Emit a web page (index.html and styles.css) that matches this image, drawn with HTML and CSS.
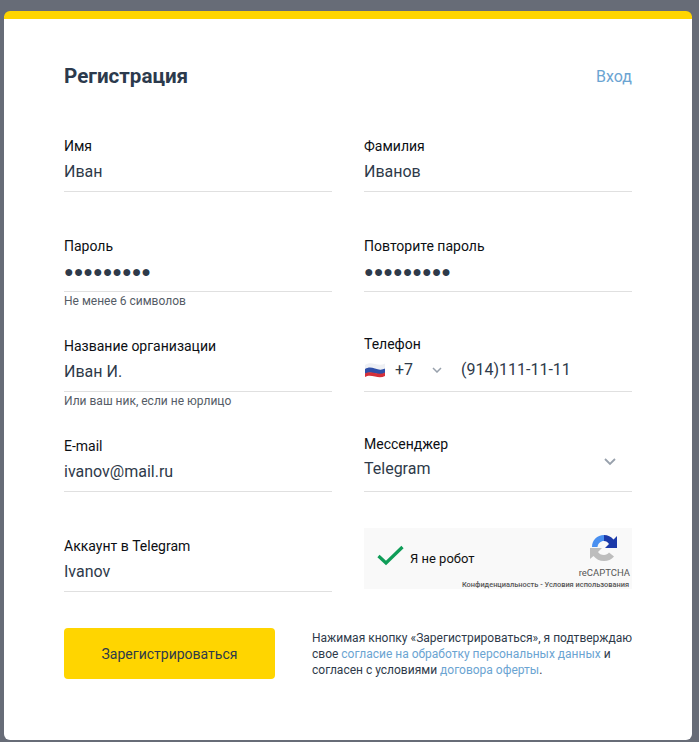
FILE: index.html
```html
<!DOCTYPE html>
<html lang="ru">
<head>
    <meta charset="UTF-8">
    <title>Регистрация</title>
    <link rel="stylesheet" href="styles.css">
</head>
<body>
    <div class="card">
        <div class="card-head">
            <h1>Регистрация</h1>
            <a class="link" href="#">Вход</a>
        </div>

        <div class="form-grid">
            <div class="field">
                <div class="label">Имя</div>
                <div class="value">Иван</div>
            </div>
            <div class="field">
                <div class="label">Фамилия</div>
                <div class="value">Иванов</div>
            </div>
            <div class="field">
                <div class="label">Пароль</div>
                <div class="value">●●●●●●●●●</div>
                <div class="hint">Не менее 6 символов</div>
            </div>
            <div class="field">
                <div class="label">Повторите пароль</div>
                <div class="value">●●●●●●●●●</div>
            </div>
            <div class="field">
                <div class="label">Название организации</div>
                <div class="value">Иван И.</div>
                <div class="hint">Или ваш ник, если не юрлицо</div>
            </div>
            <div class="field raised">
                <div class="label">Телефон</div>
                <div class="value phone">
                    <svg class="flag" width="22" height="16" viewBox="0 0 22 16">
                        <path d="M1 3c3-2 6-2 10-1s7 1 10-.5V6c-3 1.500-6 1.500-10 .5S4 5 1 7z" fill="#eef0f4"/>
                        <path d="M1 7c3-2 6-2 10-.5s7 1.500 10 0v4.500c-3 1.500-6 1.500-10 .5s-7-1-10 .5z" fill="#2f4fa8"/>
                        <path d="M1 11.500c3-1.500 6-1.500 10-.5s7 1 10-.5V14c-3 1.500-6 1.500-10 .5S4 13 1 15z" fill="#d5303a"/>
                    </svg>
                    <span class="code">+7</span>
                    <svg class="chevron small" width="10" height="6" viewBox="0 0 10 6"><path d="M1 1l4 4 4-4" fill="none" stroke="#98a1ac" stroke-width="1.500"/></svg>
                    <span>(914)111-11-11</span>
                </div>
            </div>
            <div class="field">
                <div class="label">E-mail</div>
                <div class="value">ivanov@mail.ru</div>
            </div>
            <div class="field raised">
                <div class="label">Мессенджер</div>
                <div class="value select">
                    <span>Telegram</span>
                    <svg class="chevron large" width="12" height="8" viewBox="0 0 12 8"><path d="M1 1l5 5 5-5" fill="none" stroke="#98a1ac" stroke-width="1.800"/></svg>
                </div>
            </div>
            <div class="field">
                <div class="label">Аккаунт в Telegram</div>
                <div class="value">Ivanov</div>
            </div>
            <div class="captcha">
                <svg class="check" width="27" height="21" viewBox="0 0 27 21"><path d="M1.500 11l7.500 7L25.500 2" fill="none" stroke="#0f9d58" stroke-width="3.200"/></svg>
                <span class="captcha-text">Я не робот</span>
                <div class="captcha-brand">
                    <svg width="30" height="30" viewBox="0 0 30 30">
                        <path d="M3 14C3 7 8 2 15 2v6c-3.500 0-6 2.500-6.500 6z" fill="#4a90f0"/>
                        <path d="M15 2c4 0 7 1.500 9.500 4.500L28 3v12H16l4-4c-1.200-1.800-3-3-5-3z" fill="#1c3aa9"/>
                        <path d="M1 15h12l-4 4c1.200 1.800 3.200 3 6 3 2 0 4-1 5-2.500l5 4c-2.500 3-6 4.500-10 4.500-4.500 0-8-2-10.500-5L1 26z" fill="#bdbdbd"/>
                    </svg>
                    <span class="brand-name">reCAPTCHA</span>
                </div>
                <div class="captcha-terms">Конфиденциальность - Условия использования</div>
            </div>
        </div>

        <div class="card-foot">
            <button class="submit">Зарегистрироваться</button>
            <p class="terms">Нажимая кнопку «Зарегистрироваться», я подтверждаю свое <a class="link" href="#">согласие на обработку персональных данных</a> и согласен с условиями <a class="link" href="#">договора оферты</a>.</p>
        </div>
    </div>
</body>
</html>
```

FILE: styles.css
```css
* {
    box-sizing: border-box;
}
body {
    margin: 0;
    height: 742px;
    overflow: hidden;
    background-color: #676c77;
    font-family: Roboto, "Liberation Sans", sans-serif;
}
.card {
    width: 688px;
    height: 729px;
    margin: 11px 0 0 4px;
    padding: 0 60px;
    background-color: #fff;
    border-top: 8px solid #ffd500;
    border-radius: 6px;
    color: #2e3a4a;
}
.card-head {
    display: flex;
    justify-content: space-between;
    align-items: center;
    height: 93px;
    padding-top: 21px;
}
h1 {
    margin: 0;
    font-size: 20.600px;
    font-weight: 700;
    color: #2c3a4d;
}
.card-head .link {
    margin-top: 1px;
    font-size: 16px;
}
.link {
    color: #6ba4d2;
    text-decoration: none;
}
.form-grid {
    display: grid;
    grid-template-columns: 268px 268px;
    grid-auto-rows: 100px;
    column-gap: 32px;
}
.field {
    padding-top: 24px;
}
.label {
    height: 20px;
    font-size: 14px;
    line-height: 20px;
    color: #0c0f14;
}
.value {
    height: 36px;
    padding-bottom: 3px;
    font-size: 16px;
    line-height: 32px;
    border-bottom: 1px solid #e0e0e0;
}
.hint {
    margin-top: 1px;
    font-size: 12px;
    line-height: 16px;
    color: #555c66;
}
.raised .label {
    margin-top: -2px;
}
.raised .value {
    height: 38px;
    padding-bottom: 7px;
}
.raised .phone {
    padding-bottom: 5px;
}
.phone {
    display: flex;
    align-items: center;
}
.flag {
    margin-right: 9px;
}
.code {
    width: 37px;
}
.chevron.small {
    margin-right: 19px;
}
.chevron.large {
    margin-top: -14px;
}
.select {
    display: flex;
    justify-content: space-between;
    align-items: center;
    padding-right: 16px;
}
.captcha {
    position: relative;
    display: flex;
    align-items: center;
    height: 61px;
    margin-top: 16px;
    padding-left: 13px;
    background-color: #f9f9f9;
}
.check {
    margin-top: -6px;
}
.captcha-text {
    margin-left: 6px;
    font-size: 13px;
    color: #111;
}
.captcha-brand {
    position: absolute;
    top: 5px;
    right: 2px;
    display: flex;
    flex-direction: column;
    align-items: center;
}
.brand-name {
    margin-top: 4px;
    font-size: 9.500px;
    line-height: 11px;
    color: #555;
}
.captcha-terms {
    position: absolute;
    right: 3px;
    bottom: 0;
    font-size: 7.400px;
    font-weight: 500;
    line-height: 9px;
    color: #555;
}
.card-foot {
    display: flex;
    align-items: flex-start;
    padding-top: 16px;
}
.submit {
    flex: none;
    width: 211px;
    height: 51px;
    padding: 0;
    border: none;
    border-radius: 4px;
    background-color: #ffd500;
    color: #2e3a4a;
    font-family: inherit;
    font-size: 14px;
}
.terms {
    margin: 2px -8px 0 37px;
    font-size: 12px;
    line-height: 16px;
}
```
